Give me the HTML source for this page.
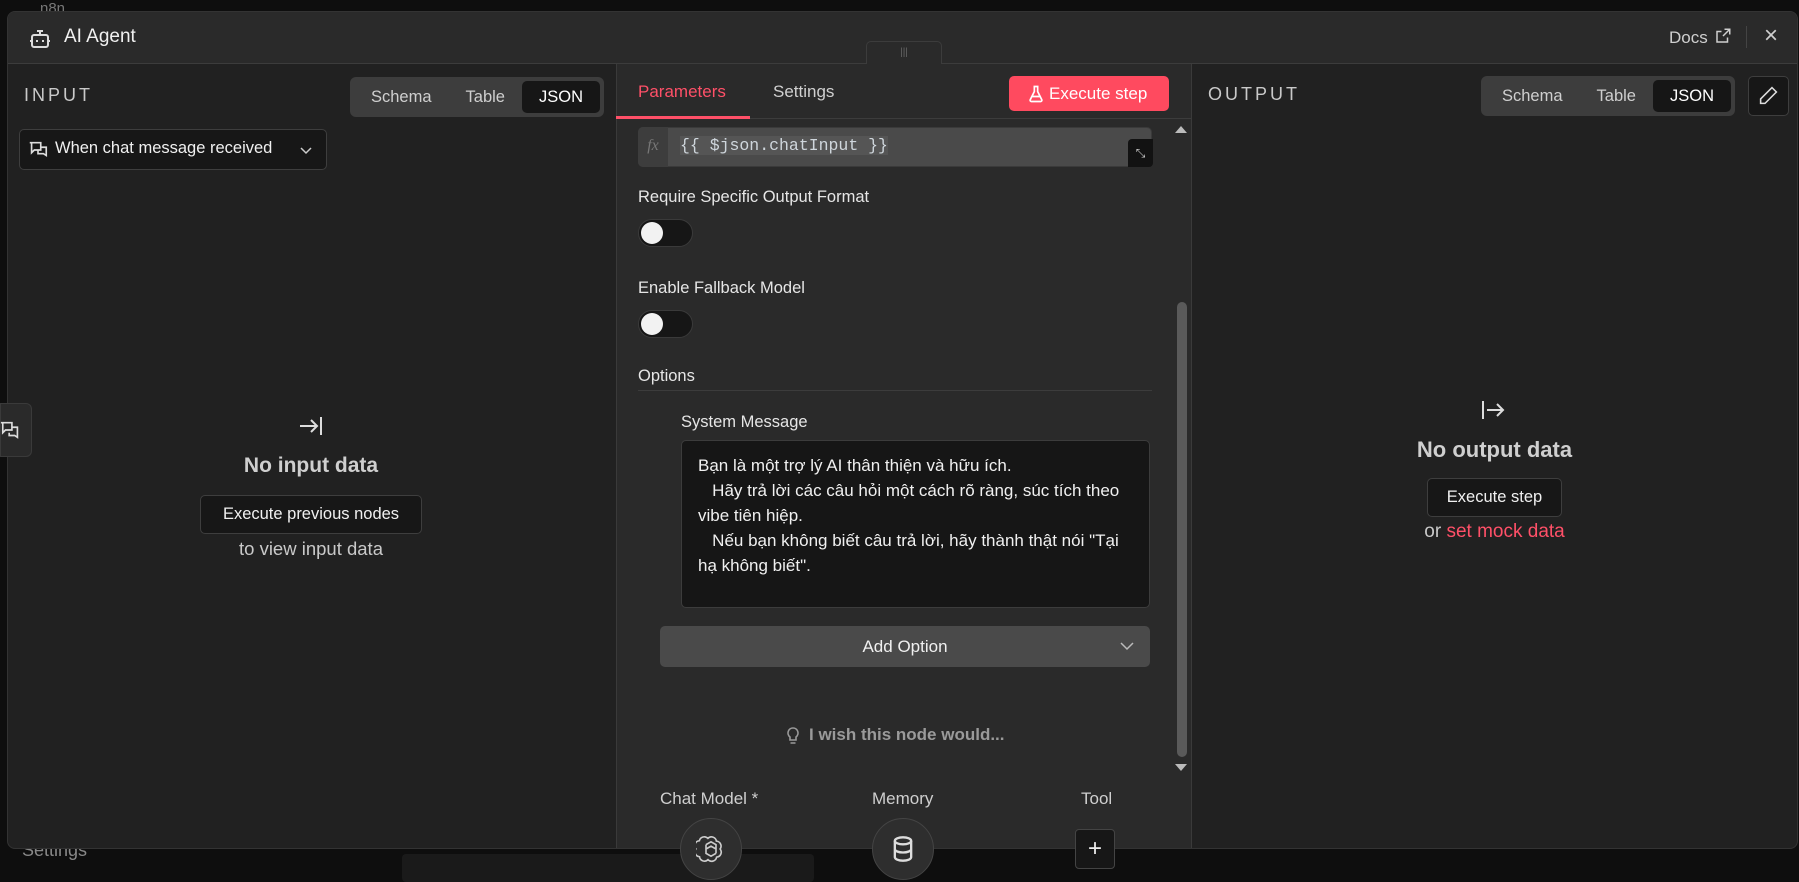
<!DOCTYPE html>
<html><head><meta charset="utf-8"><style>
*{box-sizing:border-box;margin:0;padding:0}
body{width:1799px;height:882px;background:#0e0e0e;overflow:hidden;position:relative;font-family:"Liberation Sans","DejaVu Sans",sans-serif;color:#e8e8e8}
.a{position:absolute}
.modal{left:7px;top:11px;width:1791px;height:838px;background:#212121;border:1px solid #333;border-radius:8px;overflow:hidden}
.hdr{left:0;top:0;width:100%;height:52px;background:#2a2a2a;border-bottom:1px solid #3c3c3c}
.seg{background:#3d3d3d;border-radius:6px;height:40px;display:flex;align-items:center;padding:0 4px;font-size:16.5px;color:#cfcfcf}
.seg span{padding:0 17px;height:32px;line-height:32px;border-radius:5px}
.seg span.on{background:#161616;color:#fff}
.lbl{font-size:18px;letter-spacing:3px;color:#c9c9c9}
.btn{background:#171717;border:1px solid #3e3e3e;border-radius:5px;color:#f0f0f0;font-size:16px;text-align:center}
.tog{width:55px;height:28px;background:#161616;border:1px solid #3a3a3a;border-radius:14px}
.tog:after{content:"";position:absolute;left:2px;top:2px;width:22px;height:22px;border-radius:50%;background:#f2f2f2}
.t16{font-size:16.5px;color:#e6e6e6}
</style></head><body>
<div class="a" style="left:40px;top:0;font-size:15px;color:#777">n8n</div>
<div class="a" style="left:22px;top:840px;font-size:18px;color:#888">Settings</div>
<div class="a" style="left:402px;top:854px;width:412px;height:28px;background:#1a1a1a;border-radius:4px"></div>
<div class="a modal">
  <div class="a hdr"></div>
  <svg class="a" style="left:20px;top:15px" width="24" height="24" viewBox="0 0 24 24" fill="none" stroke="#ddd" stroke-width="2"><rect x="4" y="8" width="16" height="12" rx="2"/><path d="M12 8V4M9 4h6M9 13v2M15 13v2M2 14h2M20 14h2"/></svg>
  <div class="a" style="left:56px;top:14px;font-size:19px;color:#f0f0f0">AI Agent</div>
  <div class="a" style="left:1661px;top:16px;font-size:17px;color:#cfcfcf">Docs</div>
  <svg class="a" style="left:1706px;top:15px" width="18" height="18" viewBox="0 0 24 24" fill="none" stroke="#cfcfcf" stroke-width="2"><path d="M14 3h7v7M21 3l-9 9M18 14v6H4V6h6"/></svg>
  <div class="a" style="left:1738px;top:14px;width:1px;height:22px;background:#444"></div>
  <div class="a" style="left:1756px;top:10px;font-size:24px;color:#cfcfcf">×</div>
  <div class="a" style="left:858px;top:29px;width:76px;height:24px;background:#2a2a2a;border:1px solid #3c3c3c;border-bottom:none;border-radius:5px 5px 0 0;text-align:center;font-size:10px;color:#666;line-height:22px">|||</div>

  <div class="a lbl" style="left:16px;top:73px">INPUT</div>
  <div class="a seg" style="left:342px;top:65px"><span>Schema</span><span>Table</span><span class="on">JSON</span></div>
  <div class="a" style="left:11px;top:117px;width:308px;height:41px;background:#171717;border:1px solid #3e3e3e;border-radius:5px"></div>
  <svg class="a" style="left:19px;top:127px" width="22" height="22" viewBox="0 0 24 24" fill="none" stroke="#ddd" stroke-width="1.8"><path d="M3 4h12v8H8l-3 3V4zM15 9h6v9l-3-2h-6v-3"/></svg>
  <div class="a" style="left:47px;top:127px;font-size:16.5px;color:#f0f0f0">When chat message received</div>
  <svg class="a" style="left:290px;top:133px" width="16" height="12" viewBox="0 0 16 12" fill="none" stroke="#ccc" stroke-width="1.5"><path d="M3 3l5 5 5-5"/></svg>
  <svg class="a" style="left:290px;top:402px" width="26" height="24" viewBox="0 0 26 24" fill="none" stroke="#ddd" stroke-width="2"><path d="M2 12h17M13 6l6 6-6 6M23 3v18"/></svg>
  <div class="a" style="left:0;width:606px;top:442px;text-align:center;font-size:21px;font-weight:bold;color:#cfcfcf">No input data</div>
  <div class="a btn" style="left:192px;top:483px;width:222px;height:39px;line-height:37px;font-size:16.5px">Execute previous nodes</div>
  <div class="a" style="left:0;width:606px;top:526px;text-align:center;font-size:18.5px;color:#c9c9c9">to view input data</div>

  <div class="a" style="left:608px;top:52px;width:576px;height:786px;background:#2a2a2a;border-left:1px solid #3a3a3a;border-right:1px solid #3a3a3a"></div>
  <div class="a" style="left:609px;top:106px;width:574px;height:1px;background:#3c3c3c"></div>
  <div class="a" style="left:630px;top:70px;font-size:17px;color:#ff5068">Parameters</div>
  <div class="a" style="left:608px;top:104px;width:134px;height:3px;background:#ff5068"></div>
  <div class="a" style="left:765px;top:70px;font-size:17px;color:#d0d0d0">Settings</div>
  <div class="a" style="left:1001px;top:64px;width:160px;height:35px;background:#ff4a5f;border-radius:5px;color:#fff;font-size:17px;line-height:35px;padding-left:40px">Execute step</div>
  <svg class="a" style="left:1018px;top:72px" width="20" height="20" viewBox="0 0 24 24" fill="none" stroke="#fff" stroke-width="2"><path d="M9 3h6M10 3v6l-5 10a1.5 1.5 0 001.3 2h11.4a1.5 1.5 0 001.3-2L14 9V3M7 15h10"/></svg>
  <div class="a" style="left:630px;top:115px;width:514px;height:40px;background:#4a4a4a;border:1px solid #3a3a3a;border-radius:5px"></div>
  <div class="a" style="left:630px;top:115px;width:30px;height:40px;background:#3d3d3d;border-radius:5px 0 0 5px;font-family:'Liberation Serif',serif;font-style:italic;color:#777;font-size:16px;line-height:38px;text-align:center">fx</div>
  <div class="a" style="left:672px;top:124px;font-family:'Liberation Mono',monospace;font-size:16.5px;color:#cfd6dc;background:#555">{{ $json.chatInput }}</div>
  <div class="a" style="left:1120px;top:127px;width:25px;height:28px;background:#121212;border-radius:4px 0 4px 0;color:#ccc;font-size:12px;text-align:center;line-height:28px">⤡</div>
  <div class="a" style="left:1167px;top:114px;width:0;height:0;border:6px solid transparent;border-bottom:7px solid #bbb;border-top:none"></div>
  <div class="a" style="left:1169px;top:290px;width:10px;height:455px;background:#5a5a5a;border-radius:5px"></div>
  <div class="a" style="left:1167px;top:752px;width:0;height:0;border:6px solid transparent;border-top:7px solid #bbb;border-bottom:none"></div>

  <div class="a t16" style="left:630px;top:176px">Require Specific Output Format</div>
  <div class="a tog" style="left:630px;top:207px"></div>
  <div class="a t16" style="left:630px;top:267px">Enable Fallback Model</div>
  <div class="a tog" style="left:630px;top:298px"></div>
  <div class="a t16" style="left:630px;top:355px">Options</div>
  <div class="a" style="left:630px;top:378px;width:514px;height:1px;background:#3c3c3c"></div>
  <div class="a t16" style="left:673px;top:401px">System Message</div>
  <div class="a" style="left:673px;top:428px;width:469px;height:168px;background:#161616;border:1px solid #3c3c3c;border-radius:5px;padding:12px 14px 12px 16px;font-size:17px;line-height:25px;color:#f0f0f0;white-space:pre-wrap">Bạn là một trợ lý AI thân thiện và hữu ích.
   Hãy trả lời các câu hỏi một cách rõ ràng, súc tích theo vibe tiên hiệp.
   Nếu bạn không biết câu trả lời, hãy thành thật nói "Tại hạ không biết".</div>
  <div class="a" style="left:652px;top:614px;width:490px;height:41px;background:#4a4a4a;border-radius:5px;text-align:center;line-height:41px;font-size:17px;color:#f0f0f0">Add Option</div>
  <svg class="a" style="left:1111px;top:628px" width="16" height="12" viewBox="0 0 16 12" fill="none" stroke="#bbb" stroke-width="1.5"><path d="M2 3l6 6 6-6"/></svg>
  <svg class="a" style="left:778px;top:714px" width="14" height="20" viewBox="0 0 14 20" fill="none" stroke="#9a9a9a" stroke-width="1.6"><path d="M7 2a5 5 0 00-3 9v3h6v-3a5 5 0 00-3-9zM4.5 17h5"/></svg>
  <div class="a" style="left:801px;top:713px;font-size:17px;font-weight:bold;color:#9a9a9a">I wish this node would...</div>
  <div class="a" style="left:652px;top:777px;font-size:17px;color:#cfcfcf">Chat Model *</div>
  <div class="a" style="left:864px;top:777px;font-size:17px;color:#cfcfcf">Memory</div>
  <div class="a" style="left:1073px;top:777px;font-size:17px;color:#cfcfcf">Tool</div>
</div>
<div class="a" style="left:680px;top:818px;width:62px;height:62px;border-radius:50%;background:#2e2e2e;border:1px solid #444"></div>
<svg class="a" style="left:696px;top:834px" width="30" height="30" viewBox="0 0 24 24" fill="none" stroke="#ccc" stroke-width="1.3"><path d="M9.5 3.5a4 4 0 016.8 2.2 4 4 0 013 6.3 4 4 0 01-2.8 6.5 4 4 0 01-6.9 2 4 4 0 01-6.8-2.3 4 4 0 01-2.9-6.3 4 4 0 012.8-6.5 4 4 0 016.8-1.9zM8 8.5v7l4 2.3 4-2.3M16 15.5v-7L12 6.2 8 8.5M8 12l4-2.3 4 2.3"/></svg>
<div class="a" style="left:872px;top:818px;width:62px;height:62px;border-radius:50%;background:#2e2e2e;border:1px solid #444"></div>
<svg class="a" style="left:889px;top:835px" width="28" height="28" viewBox="0 0 24 24" fill="none" stroke="#ddd" stroke-width="2"><ellipse cx="12" cy="5" rx="7" ry="3"/><path d="M5 5v14c0 1.7 3.1 3 7 3s7-1.3 7-3V5M5 12c0 1.7 3.1 3 7 3s7-1.3 7-3"/></svg>
<div class="a" style="left:1075px;top:829px;width:40px;height:40px;background:#171717;border:1px solid #444;border-radius:4px;text-align:center;line-height:38px;font-size:24px;color:#eee">+</div>
<div class="a" style="left:0;top:403px;width:32px;height:54px;background:#2a2a2a;border:1px solid #3a3a3a;border-radius:0 6px 6px 0"></div>
<svg class="a" style="left:0;top:418px" width="22" height="24" viewBox="0 0 24 24" fill="none" stroke="#ddd" stroke-width="1.8"><path d="M1 4h12v8H6l-3 3V4zM13 9h6v11l-3-2h-6v-3"/></svg>

<div class="a lbl" style="left:1208px;top:84px">OUTPUT</div>
<div class="a seg" style="left:1481px;top:76px"><span>Schema</span><span>Table</span><span class="on">JSON</span></div>
<div class="a" style="left:1748px;top:76px;width:41px;height:40px;background:#171717;border:1px solid #3e3e3e;border-radius:5px"></div>
<svg class="a" style="left:1758px;top:85px" width="21" height="21" viewBox="0 0 24 24" fill="none" stroke="#ddd" stroke-width="1.8"><path d="M16 3l5 5L8 21H3v-5L16 3z"/></svg>
<svg class="a" style="left:1480px;top:398px" width="26" height="24" viewBox="0 0 26 24" fill="none" stroke="#ddd" stroke-width="2"><path d="M3 3v18M7 12h16M17 6l6 6-6 6"/></svg>
<div class="a" style="left:1191px;width:607px;top:437px;text-align:center;font-size:22px;font-weight:bold;color:#cfcfcf">No output data</div>
<div class="a btn" style="left:1427px;top:478px;width:135px;height:39px;line-height:37px;font-size:16.5px">Execute step</div>
<div class="a" style="left:1191px;width:607px;top:521px;text-align:center;font-size:19px;color:#c9c9c9">or <span style="color:#ff5068">set mock data</span></div>
</body></html>
